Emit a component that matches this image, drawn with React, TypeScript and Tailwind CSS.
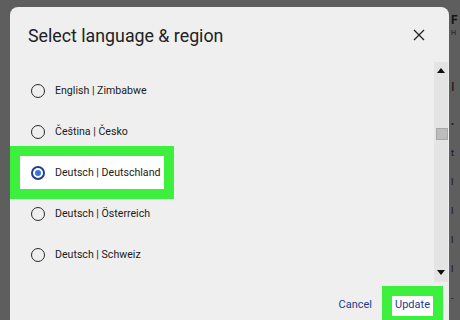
import React from 'react';

const options = [
  'English | Zimbabwe',
  'Čeština | Česko',
  'Deutsch | Deutschland',
  'Deutsch | Österreich',
  'Deutsch | Schweiz',
];

const Radio: React.FC<{ checked?: boolean }> = ({ checked }) => (
  <span
    className={`w-[14px] h-[14px] rounded-full flex items-center justify-center shrink-0 ${
      checked ? 'border-2 border-[#1c3f94]' : 'border-[1.5px] border-[#2a2a2a]'
    }`}
  >
    {checked && <span className="w-[6px] h-[6px] rounded-full bg-[#3a72e0]" />}
  </span>
);

const App: React.FC = () => {
  return (
    <div
      className="w-[460px] h-[320px] bg-[#5e5e5e] overflow-hidden flex"
      style={{ fontFamily: 'Roboto, "Liberation Sans", sans-serif' }}
    >
      <div className="pl-[10px] pt-[7px]">
        <div className="w-[439px] h-[340px] bg-[#efefef] rounded-t-[8px] flex flex-col">
          {/* header */}
          <div className="h-[55px] flex items-center justify-between pl-[18px] pr-[24px] pt-[4px]">
            <h2 className="text-[17.8px] text-[#202124]">Select language &amp; region</h2>
            <svg width="12" height="12" viewBox="0 0 12 12" className="mt-[-4px]">
              <path d="M1 1 L11 11 M11 1 L1 11" stroke="#222" strokeWidth="1.3" fill="none" />
            </svg>
          </div>

          {/* body */}
          <div className="flex h-[220px]">
            <div className="flex-1 pl-[20px] pt-[8px]">
              {options.map((o, i) => {
                const sel = i === 2;
                return (
                  <div key={o} className="relative h-[41px] flex items-center gap-[10px]">
                    {sel && (
                      <div className="absolute left-[-20px] top-[-6px] w-[164px] h-[53px] border-[10px] border-[#3ef03e] bg-white" />
                    )}
                    <span className="relative ml-[1px]">
                      <Radio checked={sel} />
                    </span>
                    <span className="relative text-[10.6px] text-[#1a1a1a]">{o}</span>
                  </div>
                );
              })}
            </div>
            {/* scrollbar */}
            <div className="w-[14px] mr-[1px] bg-[#e4e4e4] flex flex-col items-center">
              <svg width="8" height="5" viewBox="0 0 8 5" className="mt-[6px]">
                <path d="M0 5 L4 0 L8 5 Z" fill="#111" />
              </svg>
              <div className="w-[12px] h-[12px] ml-[2px] mt-[55px] bg-[#bcbcbc] border border-[#a8a8a8]" />
              <div className="flex-1" />
              <svg width="8" height="5" viewBox="0 0 8 5" className="mb-[7px]">
                <path d="M0 0 L8 0 L4 5 Z" fill="#111" />
              </svg>
            </div>
          </div>

          {/* footer */}
          <div className="flex items-start justify-end pr-[6px] pt-[4px] gap-[10px]">
            <span className="text-[11px] text-[#1d3c8c] mt-[11px]">Cancel</span>
            <div className="border-[10px] border-[#3ef03e] bg-white w-[61px] h-[40px] flex items-start justify-center pt-[1px]">
              <span className="text-[11px] text-[#1d3c8c]">Update</span>
            </div>
          </div>
        </div>
      </div>

      {/* glimpse of the page behind */}
      <div className="flex-1 pl-[2px] pt-[14px] text-[#151515] leading-none overflow-hidden whitespace-nowrap">
        <div className="text-[12px] font-bold">F</div>
        <div className="text-[7px] mt-[4px]">H</div>
        <div className="text-[13px] mt-[43px]">I</div>
        <div className="text-[9px] mt-[27px]">•</div>
        <div className="text-[9px] mt-[20px]">t</div>
        <div className="text-[9px] mt-[20px]">I</div>
        <div className="text-[9px] mt-[20px]">I</div>
        <div className="text-[9px] mt-[20px]">I</div>
        <div className="text-[9px] mt-[20px]">I</div>
        <div className="text-[9px] mt-[20px]">-</div>
      </div>
    </div>
  );
};

export default App;
